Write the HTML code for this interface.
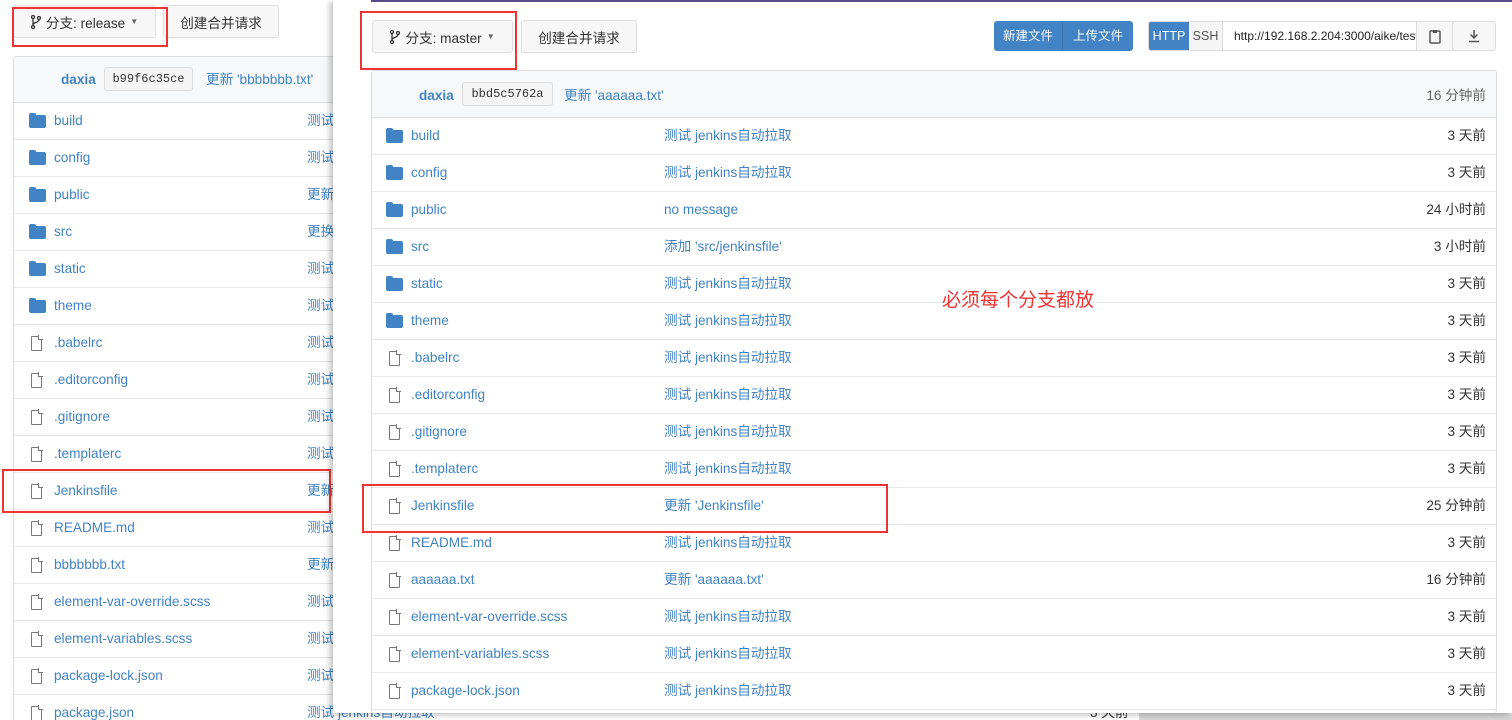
<!DOCTYPE html>
<html><head><meta charset="utf-8"><style>
*{margin:0;padding:0;box-sizing:border-box}
html,body{width:1512px;height:720px;overflow:hidden}
body{background:#fff;font-family:"Liberation Sans","Noto Sans CJK SC",sans-serif;font-size:13.6px;color:#333;position:relative}
.a{position:absolute;line-height:16px}
.btn{position:absolute;border:1px solid #ddd;border-radius:3px;background:#f7f7f7;display:flex;align-items:center;justify-content:center;font-size:13.6px;color:#333;gap:5px}
.tbl{position:absolute;border:1px solid #ddd;border-radius:3px;background:#fff;overflow:hidden}
.hdr{position:absolute;left:0;right:0;top:0;background:#f7f8f9;border-bottom:1px solid #ddd}
.row{position:absolute;left:0;right:0;height:37px;border-bottom:1px solid #e6e6e6}
.row span{position:absolute;top:10px;white-space:nowrap;line-height:16px}
.n{color:#4183c4}.m{color:#4183c4}.t{color:#333}
.fold{position:absolute;top:12px;width:17px;height:13px;background:#4183c4;border-radius:2px}
.fold:before{content:"";position:absolute;left:0;top:-2px;width:7px;height:3px;background:#4183c4;border-radius:2px 2px 0 0}
.file{position:absolute;top:11px;width:11px;height:15px;border:1.5px solid #777;border-radius:1px}
.file:after{content:"";position:absolute;right:-2px;top:-2px;width:4px;height:4px;background:#fff;border-left:1.5px solid #777;border-bottom:1.5px solid #777}
.red{position:absolute;border:2px solid #ee3333}
.hash{position:absolute;border:1px solid #ddd;border-radius:3px;background:#f5f5f5;font-family:"Liberation Mono",monospace;font-size:12px;display:flex;align-items:center;justify-content:center}
</style></head><body>
<svg width="0" height="0" style="position:absolute"><defs><symbol id="br" viewBox="0 0 10 14"><circle cx="2" cy="2" r="1.5" fill="none" stroke="#333" stroke-width="1.3"/><circle cx="2" cy="12" r="1.5" fill="none" stroke="#333" stroke-width="1.3"/><circle cx="8" cy="3" r="1.5" fill="none" stroke="#333" stroke-width="1.3"/><path d="M2 3.5V10.5M8 4.5C8 8 2 7 2 10" fill="none" stroke="#333" stroke-width="1.3"/></symbol></defs></svg>

<!-- LEFT (background) panel -->
<div class="btn" style="left:13px;top:5px;width:143px;height:33px"><svg width="10" height="14"><use href="#br"/></svg>分支: release <span style="font-size:8px;color:#666">▼</span></div>
<div class="btn" style="left:163px;top:5px;width:116px;height:33px">创建合并请求</div>
<div class="red" style="left:12px;top:7px;width:156px;height:40px"></div>
<div class="tbl" style="left:13px;top:56px;width:1127px;height:700px">
 <div class="hdr" style="height:46px"><span class="a" style="left:47px;top:15px;color:#4183c4;font-weight:bold">daxia</span><div class="hash" style="left:90px;top:10px;width:89px;height:24px">b99f6c35ce</div><span class="a" style="left:192px;top:15px;color:#4183c4">更新 'bbbbbbb.txt'</span></div>
 <div class="row" style="top:46px"><i class="fold" style="left:15px"></i><span class="n" style="left:40px">build</span><span class="m" style="left:293px">测试</span></div>
 <div class="row" style="top:83px"><i class="fold" style="left:15px"></i><span class="n" style="left:40px">config</span><span class="m" style="left:293px">测试</span></div>
 <div class="row" style="top:120px"><i class="fold" style="left:15px"></i><span class="n" style="left:40px">public</span><span class="m" style="left:293px">更新</span></div>
 <div class="row" style="top:157px"><i class="fold" style="left:15px"></i><span class="n" style="left:40px">src</span><span class="m" style="left:293px">更换</span></div>
 <div class="row" style="top:194px"><i class="fold" style="left:15px"></i><span class="n" style="left:40px">static</span><span class="m" style="left:293px">测试</span></div>
 <div class="row" style="top:231px"><i class="fold" style="left:15px"></i><span class="n" style="left:40px">theme</span><span class="m" style="left:293px">测试</span></div>
 <div class="row" style="top:268px"><i class="file" style="left:17px"></i><span class="n" style="left:40px">.babelrc</span><span class="m" style="left:293px">测试</span></div>
 <div class="row" style="top:305px"><i class="file" style="left:17px"></i><span class="n" style="left:40px">.editorconfig</span><span class="m" style="left:293px">测试</span></div>
 <div class="row" style="top:342px"><i class="file" style="left:17px"></i><span class="n" style="left:40px">.gitignore</span><span class="m" style="left:293px">测试</span></div>
 <div class="row" style="top:379px"><i class="file" style="left:17px"></i><span class="n" style="left:40px">.templaterc</span><span class="m" style="left:293px">测试</span></div>
 <div class="row" style="top:416px"><i class="file" style="left:17px"></i><span class="n" style="left:40px">Jenkinsfile</span><span class="m" style="left:293px">更新</span></div>
 <div class="row" style="top:453px"><i class="file" style="left:17px"></i><span class="n" style="left:40px">README.md</span><span class="m" style="left:293px">测试</span></div>
 <div class="row" style="top:490px"><i class="file" style="left:17px"></i><span class="n" style="left:40px">bbbbbbb.txt</span><span class="m" style="left:293px">更新</span></div>
 <div class="row" style="top:527px"><i class="file" style="left:17px"></i><span class="n" style="left:40px">element-var-override.scss</span><span class="m" style="left:293px">测试</span></div>
 <div class="row" style="top:564px"><i class="file" style="left:17px"></i><span class="n" style="left:40px">element-variables.scss</span><span class="m" style="left:293px">测试</span></div>
 <div class="row" style="top:601px"><i class="file" style="left:17px"></i><span class="n" style="left:40px">package-lock.json</span><span class="m" style="left:293px">测试</span></div>
 <div class="row" style="top:638px"><i class="file" style="left:17px"></i><span class="n" style="left:40px">package.json</span><span class="m" style="left:293px">测试 jenkins自动拉取</span><span class="t" style="left:1076px">3 天前</span></div>
</div>
<div class="red" style="left:2px;top:469px;width:329px;height:44px"></div>
<div class="a" style="left:1140px;top:712px;width:372px;height:8px;background:#d8d8d8"></div>

<!-- RIGHT (front) panel -->
<div class="a" style="left:333px;top:0;width:1179px;height:713px;background:#fff;box-shadow:-3px 2px 6px rgba(0,0,0,.25)">
 <div class="a" style="left:38px;top:0;width:1141px;height:2px;background:#5a4a8a"></div>
</div>
<div class="btn" style="left:372px;top:20px;width:141px;height:33px"><svg width="10" height="14"><use href="#br"/></svg>分支: master <span style="font-size:8px;color:#666">▼</span></div>
<div class="btn" style="left:521px;top:20px;width:116px;height:33px">创建合并请求</div>
<div class="red" style="left:360px;top:11px;width:157px;height:59px"></div>
<div class="a" style="left:994px;top:21px;width:139px;height:30px;background:#4183c4;border-radius:3px;color:#fff;display:flex;font-size:12.5px"><span style="width:69px;text-align:center;line-height:30px;border-right:1px solid #3a75b0">新建文件</span><span style="width:70px;text-align:center;line-height:30px">上传文件</span></div>
<div class="a" style="left:1148px;top:21px;width:348px;height:30px;border:1px solid #ddd;border-radius:3px;display:flex;font-size:12.5px;overflow:hidden">
 <span style="width:40px;background:#4183c4;color:#fff;text-align:center;line-height:28px">HTTP</span>
 <span style="width:34px;background:#f5f5f5;color:#555;text-align:center;line-height:28px;border-right:1px solid #ddd">SSH</span>
 <span style="width:194px;padding-left:11px;line-height:28px;color:#222;overflow:hidden;white-space:nowrap;border-right:1px solid #ddd;font-size:12px">http://192.168.2.204:3000/aike/test</span>
 <span style="width:36px;background:#f7f7f7;border-right:1px solid #ddd;display:flex;align-items:center;justify-content:center"><svg width="12" height="15"><rect x="1" y="2" width="10" height="12" rx="1" fill="none" stroke="#555" stroke-width="1.5"/><rect x="4" y="1" width="4" height="3" fill="#555"/></svg></span>
 <span style="width:42px;background:#f7f7f7;display:flex;align-items:center;justify-content:center"><svg width="12" height="14"><path d="M6 1V9M2.5 5.5L6 9L9.5 5.5M1 12.5H11" fill="none" stroke="#555" stroke-width="1.5"/></svg></span>
</div>
<div class="tbl" style="left:371px;top:70px;width:1126px;height:643px;border-bottom:none">
 <div class="hdr" style="height:47px"><span class="a" style="left:47px;top:17px;color:#4183c4;font-weight:bold">daxia</span><div class="hash" style="left:90px;top:11px;width:91px;height:24px">bbd5c5762a</div><span class="a" style="left:192px;top:17px;color:#4183c4">更新 'aaaaaa.txt'</span><span class="a" style="right:10px;top:17px;color:#666">16 分钟前</span></div>
 <div class="row" style="top:47px"><i class="fold" style="left:14px"></i><span class="n" style="left:39px">build</span><span class="m" style="left:292px">测试 jenkins自动拉取</span><span class="t" style="right:10px">3 天前</span></div>
 <div class="row" style="top:84px"><i class="fold" style="left:14px"></i><span class="n" style="left:39px">config</span><span class="m" style="left:292px">测试 jenkins自动拉取</span><span class="t" style="right:10px">3 天前</span></div>
 <div class="row" style="top:121px"><i class="fold" style="left:14px"></i><span class="n" style="left:39px">public</span><span class="m" style="left:292px">no message</span><span class="t" style="right:10px">24 小时前</span></div>
 <div class="row" style="top:158px"><i class="fold" style="left:14px"></i><span class="n" style="left:39px">src</span><span class="m" style="left:292px">添加 'src/jenkinsfile'</span><span class="t" style="right:10px">3 小时前</span></div>
 <div class="row" style="top:195px"><i class="fold" style="left:14px"></i><span class="n" style="left:39px">static</span><span class="m" style="left:292px">测试 jenkins自动拉取</span><span class="t" style="right:10px">3 天前</span></div>
 <div class="row" style="top:232px"><i class="fold" style="left:14px"></i><span class="n" style="left:39px">theme</span><span class="m" style="left:292px">测试 jenkins自动拉取</span><span class="t" style="right:10px">3 天前</span></div>
 <div class="row" style="top:269px"><i class="file" style="left:17px"></i><span class="n" style="left:39px">.babelrc</span><span class="m" style="left:292px">测试 jenkins自动拉取</span><span class="t" style="right:10px">3 天前</span></div>
 <div class="row" style="top:306px"><i class="file" style="left:17px"></i><span class="n" style="left:39px">.editorconfig</span><span class="m" style="left:292px">测试 jenkins自动拉取</span><span class="t" style="right:10px">3 天前</span></div>
 <div class="row" style="top:343px"><i class="file" style="left:17px"></i><span class="n" style="left:39px">.gitignore</span><span class="m" style="left:292px">测试 jenkins自动拉取</span><span class="t" style="right:10px">3 天前</span></div>
 <div class="row" style="top:380px"><i class="file" style="left:17px"></i><span class="n" style="left:39px">.templaterc</span><span class="m" style="left:292px">测试 jenkins自动拉取</span><span class="t" style="right:10px">3 天前</span></div>
 <div class="row" style="top:417px"><i class="file" style="left:17px"></i><span class="n" style="left:39px">Jenkinsfile</span><span class="m" style="left:292px">更新 'Jenkinsfile'</span><span class="t" style="right:10px">25 分钟前</span></div>
 <div class="row" style="top:454px"><i class="file" style="left:17px"></i><span class="n" style="left:39px">README.md</span><span class="m" style="left:292px">测试 jenkins自动拉取</span><span class="t" style="right:10px">3 天前</span></div>
 <div class="row" style="top:491px"><i class="file" style="left:17px"></i><span class="n" style="left:39px">aaaaaa.txt</span><span class="m" style="left:292px">更新 'aaaaaa.txt'</span><span class="t" style="right:10px">16 分钟前</span></div>
 <div class="row" style="top:528px"><i class="file" style="left:17px"></i><span class="n" style="left:39px">element-var-override.scss</span><span class="m" style="left:292px">测试 jenkins自动拉取</span><span class="t" style="right:10px">3 天前</span></div>
 <div class="row" style="top:565px"><i class="file" style="left:17px"></i><span class="n" style="left:39px">element-variables.scss</span><span class="m" style="left:292px">测试 jenkins自动拉取</span><span class="t" style="right:10px">3 天前</span></div>
 <div class="row" style="top:602px"><i class="file" style="left:17px"></i><span class="n" style="left:39px">package-lock.json</span><span class="m" style="left:292px">测试 jenkins自动拉取</span><span class="t" style="right:10px">3 天前</span></div>
</div>
<div class="red" style="left:362px;top:484px;width:526px;height:49px"></div>
<div class="a" style="left:942px;top:290px;color:#ee3333;font-size:19px;line-height:22px">必须每个分支都放</div>
</body></html>
